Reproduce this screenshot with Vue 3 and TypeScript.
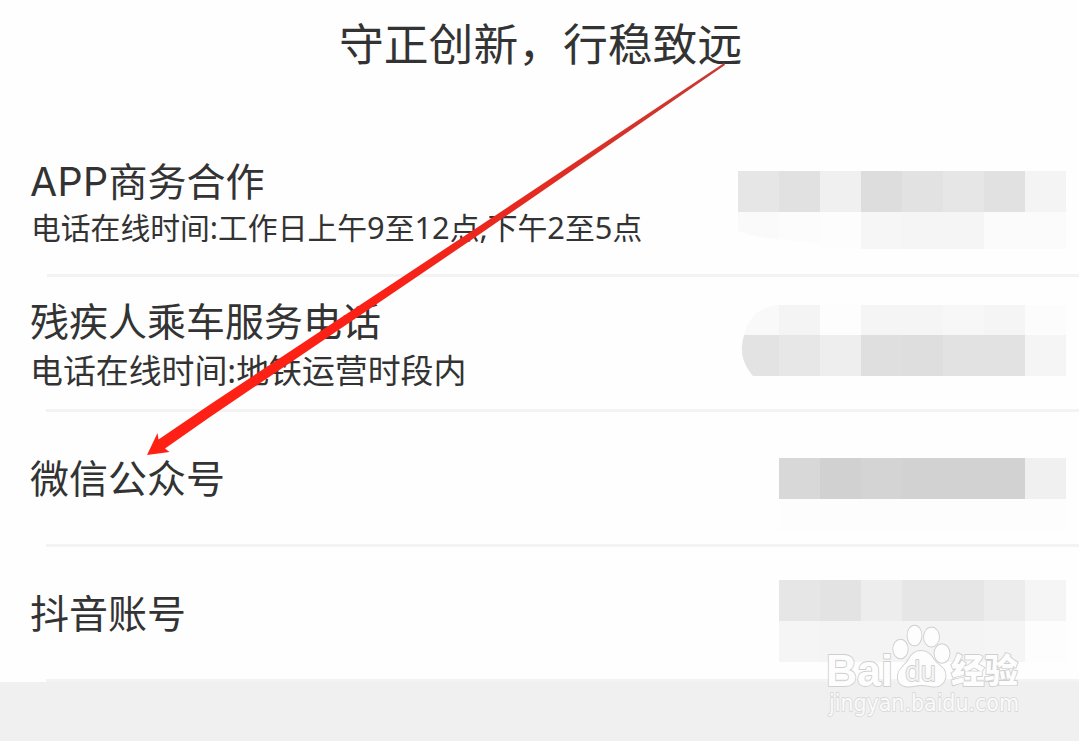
<script setup lang="ts">
interface Segment {
  text: string
  latin?: boolean
}

interface Band {
  y: number
  height: number
  cells: string[]
}

interface Row {
  key: string
  title: Segment[]
  note?: Segment[]
  bands: Band[]
  clip: string
}

const CELL = 41

const rows: Row[] = [
  {
    key: 'business',
    title: [{ text: 'APP', latin: true }, { text: '商务合作' }],
    note: [
      { text: '电话在线时间' },
      { text: ':', latin: true },
      { text: '工作日上午' },
      { text: '9', latin: true },
      { text: '至' },
      { text: '12', latin: true },
      { text: '点' },
      { text: ',', latin: true },
      { text: '下午' },
      { text: '2', latin: true },
      { text: '至' },
      { text: '5', latin: true },
      { text: '点' },
    ],
    bands: [
      { y: 30, height: 41, cells: ['#e6e6e6', '#e1e1e1', '#f0f0f0', '#dddddd', '#e2e2e2', '#e6e6e6', '#e1e1e1', '#f4f4f4'] },
      { y: 71, height: 37, cells: ['#fafafa', '#fcfcfc', '#fdfdfd', '#f6f6f6', '#f5f5f5', '#f5f5f5', '#fbfbfb', '#fbfbfb'] },
    ],
    clip: 'M0 0H328V135H82V103C60 99 20 99 0 90Z',
  },
  {
    key: 'access',
    title: [{ text: '残疾人乘车服务电话' }],
    note: [{ text: '电话在线时间' }, { text: ':', latin: true }, { text: '地铁运营时段内' }],
    bands: [
      { y: 28, height: 30, cells: ['#f9f9f9', '#f4f4f4', '#fdfdfd', '#f5f5f5', '#f5f5f5', '#f7f7f7', '#f5f5f5', '#fcfcfc'] },
      { y: 58, height: 41, cells: ['#e3e3e3', '#e7e7e7', '#eeeeee', '#dfdfdf', '#dedede', '#e2e2e2', '#e2e2e2', '#f5f5f5'] },
    ],
    clip: 'M328 0V135H24L15 99C7 90 3 79 4 69C7 43 20 29 41 28V0Z',
  },
  {
    key: 'wechat',
    title: [{ text: '微信公众号' }],
    bands: [
      { y: 46, height: 41, cells: ['none', '#d8d8d8', '#d1d1d1', '#d4d4d4', '#d2d2d2', '#d2d2d2', '#d2d2d2', '#f0f0f0'] },
      { y: 87, height: 32, cells: ['none', '#fdfdfd', '#fdfdfd', '#fdfdfd', '#fdfdfd', '#fdfdfd', '#fdfdfd', '#fdfdfd'] },
    ],
    clip: 'M0 0H328V135H0Z',
  },
  {
    key: 'douyin',
    title: [{ text: '抖音账号' }],
    bands: [
      { y: 33, height: 41, cells: ['none', '#e6e6e6', '#e3e3e3', '#ededed', '#e6e6e6', '#e6e6e6', '#ececec', '#f5f5f5'] },
      { y: 74, height: 41, cells: ['none', '#f5f5f5', '#f4f4f4', '#f4f4f4', '#f4f4f4', '#f4f4f4', '#f5f5f5', '#fdfdfd'] },
    ],
    clip: 'M0 0H328V135H0Z',
  },
]
</script>

<template>
  <main class="page">
    <header class="slogan">守正创新，行稳致远</header>

    <ul class="list">
      <li v-for="row in rows" :key="row.key" class="row" :class="row.key">
        <div class="label">
          <div class="title">
            <span v-for="(s, i) in row.title" :key="i" :class="{ latin: s.latin }">{{ s.text }}</span>
          </div>
          <div v-if="row.note" class="note">
            <span v-for="(s, i) in row.note" :key="i" :class="{ latin: s.latin }">{{ s.text }}</span>
          </div>
        </div>
        <svg class="mosaic" viewBox="0 0 328 135" aria-hidden="true">
          <clipPath :id="'clip-' + row.key"><path :d="row.clip" /></clipPath>
          <g :clip-path="`url(#clip-${row.key})`" shape-rendering="crispEdges">
            <template v-for="band in row.bands" :key="band.y">
              <rect
                v-for="(fill, i) in band.cells"
                :key="i"
                :x="i * CELL"
                :y="band.y"
                :width="CELL"
                :height="band.height"
                :fill="fill"
              />
            </template>
          </g>
        </svg>
      </li>
    </ul>

    <footer class="bottom"></footer>

    <svg class="overlay" viewBox="0 0 1079 741" aria-hidden="true">
      <defs>
        <linearGradient id="shaft" gradientUnits="userSpaceOnUse" x1="724" y1="64" x2="147" y2="455">
          <stop offset="0" stop-color="#c63a32" />
          <stop offset="0.35" stop-color="#e62a20" />
          <stop offset="0.6" stop-color="#fb2116" />
          <stop offset="1" stop-color="#ff2014" />
        </linearGradient>
      </defs>
      <path d="M724 63L725 64.9L480 234L340 329L210 417L165 448.5L169.5 452L147 455L157.5 433L158.5 439.5L210 404.5L340 318.3L475 229Z" fill="url(#shaft)" />

      <g class="mark-art">
        <text class="brand" x="826" y="686" textLength="67" lengthAdjust="spacingAndGlyphs">Bai</text>
        <ellipse cx="900.5" cy="649" rx="7.2" ry="9.3" />
        <ellipse cx="914.5" cy="635.5" rx="7" ry="9.8" />
        <ellipse cx="931.5" cy="637" rx="7.5" ry="9.5" />
        <ellipse cx="942" cy="653.5" rx="7.5" ry="9.3" />
        <path d="M921 651C929 651 932 657 935 661C940 667 946 668 945.5 676C945 684 939 687 933 686.5C928 686 925 685 921 685C916 685 913 687 907 686.5C900 686 897 681 898 675C899 668 905 666 909 659C912 654 915 651 921 651Z" />
        <text class="du" x="905" y="681" textLength="31" lengthAdjust="spacingAndGlyphs">du</text>
        <text class="jy" x="951" y="683" textLength="67" lengthAdjust="spacingAndGlyphs">经验</text>
        <text class="url" x="829" y="711" textLength="190" lengthAdjust="spacingAndGlyphs">jingyan.baidu.com</text>
      </g>
    </svg>
  </main>
</template>

<style>
body {
  margin: 0;
  background: #fefefe;
}
</style>

<style scoped>
.page {
  position: relative;
  display: flex;
  flex-direction: column;
  width: 1079px;
  height: 741px;
  overflow: hidden;
  background: #fefefe;
  color: #333;
  font-family: "Noto Sans CJK SC", sans-serif;
}

.slogan {
  box-sizing: border-box;
  height: 141px;
  padding: 9px 0 0 339px;
  font-size: 44.8px;
  line-height: 66px;
  white-space: nowrap;
}

.list {
  margin: 0;
  padding: 0;
  list-style: none;
}

.row {
  display: flex;
  justify-content: space-between;
  box-sizing: border-box;
  height: 135px;
  padding: 0 13px 0 30px;
  background: linear-gradient(#f3f3f3, #f3f3f3) 46px 132px / 1033px 3px no-repeat;
}

.business {
  height: 136px;
  background-position: 47px 133px;
}

.label {
  display: flex;
  flex-direction: column;
  white-space: nowrap;
}

.title {
  height: 51px;
  font-size: 39px;
  line-height: 52px;
}

.title .latin {
  font-family: Inter, sans-serif;
  font-size: 39.4px;
  letter-spacing: 0.3px;
}

.note {
  height: 40px;
  line-height: 40px;
}

.note .latin {
  font-family: "Noto Sans", sans-serif;
}

.business .label {
  padding-top: 12px;
}

.business .note {
  padding-top: 2px;
  padding-left: 1px;
  font-size: 29.8px;
}

.business .note .latin {
  font-size: 30.8px;
}

.access .label {
  padding-top: 16px;
}

.access .note {
  padding-top: 5px;
  font-size: 32.9px;
}

.wechat .label {
  padding-top: 38px;
}

.douyin .label {
  padding-top: 38px;
}

.mosaic {
  flex: none;
  width: 328px;
  height: 135px;
}

.bottom {
  flex: 1;
  background: #f0f0f0;
}

.overlay {
  position: absolute;
  inset: 0;
  width: 1079px;
  height: 741px;
}

.mark-art {
  fill: #fdfdfd;
  stroke: #cfcfcf;
  stroke-width: 1.8;
  stroke-linejoin: round;
  paint-order: stroke;
}

.brand {
  font: bold 45px "Liberation Sans", sans-serif;
}

.du {
  fill: #f4f4f4;
  font: 27px "Open Sans", sans-serif;
}

.jy {
  font: 900 34px "Noto Sans CJK SC", sans-serif;
}

.url {
  fill: #fafafa;
  stroke: #dadada;
  font: 23.5px "DejaVu Sans", sans-serif;
}
</style>
